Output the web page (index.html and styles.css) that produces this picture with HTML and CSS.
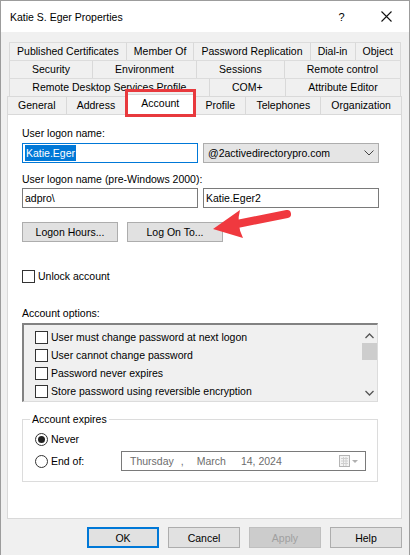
FILE: index.html
```html
<!DOCTYPE html>
<html lang="en">
<head>
  <meta charset="UTF-8">
  <title>Katie S. Eger Properties</title>
  <link rel="stylesheet" href="styles.css">
</head>
<body>

<div class="window">
  <header class="titlebar">
    <span class="title">Katie S. Eger Properties</span>
    <span class="caption-btn help-btn">?</span>
    <span class="caption-btn close-btn">
      <svg width="11" height="11" viewBox="0 0 11 11"><path d="M0.5 0.5 L10.5 10.5 M10.5 0.5 L0.5 10.5" stroke="#111" stroke-width="1.1" fill="none"/></svg>
    </span>
  </header>

  <div class="dialog">
    <div class="tabs">
      <div class="tab-row back">
        <span class="tab">Published Certificates</span>
        <span class="tab">Member Of</span>
        <span class="tab">Password Replication</span>
        <span class="tab">Dial-in</span>
        <span class="tab">Object</span>
      </div>
      <div class="tab-row back">
        <span class="tab">Security</span>
        <span class="tab">Environment</span>
        <span class="tab">Sessions</span>
        <span class="tab">Remote control</span>
      </div>
      <div class="tab-row back">
        <span class="tab">Remote Desktop Services Profile</span>
        <span class="tab">COM+</span>
        <span class="tab">Attribute Editor</span>
      </div>
      <div class="tab-row front">
        <span class="tab">General</span>
        <span class="tab">Address</span>
        <span class="tab active">Account</span>
        <span class="tab">Profile</span>
        <span class="tab">Telephones</span>
        <span class="tab">Organization</span>
      </div>
    </div>

    <div class="panel">
      <div class="field-label first">User logon name:</div>
      <div class="field-row">
        <div class="textbox focused"><span class="selected-text">Katie.Eger</span></div>
        <div class="combo">
          <span>@2activedirectorypro.com</span>
          <svg width="10" height="6" viewBox="0 0 10 6"><path d="M0.5 0.5 L5 5 L9.5 0.5" stroke="#444" fill="none"/></svg>
        </div>
      </div>

      <div class="field-label second">User logon name (pre-Windows 2000):</div>
      <div class="field-row tight">
        <div class="textbox">adpro\</div>
        <div class="textbox">Katie.Eger2</div>
      </div>

      <div class="button-row">
        <button class="btn">Logon Hours...</button>
        <button class="btn">Log On To...</button>
      </div>

      <label class="check-row unlock"><span class="check"></span>Unlock account</label>

      <div class="field-label options">Account options:</div>
      <div class="listbox">
        <div class="list-items">
          <div class="check-row"><span class="check"></span>User must change password at next logon</div>
          <div class="check-row"><span class="check"></span>User cannot change password</div>
          <div class="check-row"><span class="check"></span>Password never expires</div>
          <div class="check-row"><span class="check"></span>Store password using reversible encryption</div>
        </div>
        <div class="scrollbar">
          <svg width="9" height="6" viewBox="0 0 9 6"><path d="M0.5 5 L4.5 1 L8.5 5" stroke="#555" stroke-width="1.3" fill="none"/></svg>
          <div class="thumb"></div>
          <div class="track"></div>
          <svg width="9" height="6" viewBox="0 0 9 6"><path d="M0.5 1 L4.5 5 L8.5 1" stroke="#555" stroke-width="1.3" fill="none"/></svg>
        </div>
      </div>

      <fieldset class="groupbox">
        <legend>Account expires</legend>
        <div class="radio-row"><span class="radio checked"></span>Never</div>
        <div class="radio-row end-row">
          <span class="radio"></span><span class="end-label">End of:</span>
          <div class="datepicker">
            <span class="day">Thursday</span>
            <span class="comma">,</span>
            <span class="month">March</span>
            <span class="date">14, 2024</span>
            <svg class="cal" width="20" height="12" viewBox="0 0 20 12">
              <rect x="0.5" y="0.5" width="10" height="11" fill="#f4f4f4" stroke="#b5b5b5"/>
              <path d="M2 3.5 H9 M2 6 H9 M2 8.5 H9 M4.5 2 V11 M7 2 V11" stroke="#d0d0d0"/>
              <path d="M13 5 L19 5 L16 8 Z" fill="#b0b0b0"/>
            </svg>
          </div>
        </div>
      </fieldset>

      <!-- callout arrow pointing at the Log On To button -->
      <svg class="callout-arrow" width="90" height="40" viewBox="0 0 90 40">
        <path d="M32 19 L82 9" stroke="#f0393f" stroke-width="8" stroke-linecap="round"/>
        <path d="M8 24 L35 5 Q31 19 38 33 Z" fill="#f0393f"/>
      </svg>
    </div>

    <div class="footer-buttons">
      <button class="btn default">OK</button>
      <button class="btn">Cancel</button>
      <button class="btn" disabled>Apply</button>
      <button class="btn">Help</button>
    </div>
  </div>
</div>

</body>
</html>
```

FILE: styles.css
```css
* {
  box-sizing: border-box;
}
body {
  margin: 0;
  background: #fff;
  font-family: "Liberation Sans", Arial, sans-serif;
  font-size: 10.5px;
  color: #000;
}
.window {
  width: 410px;
  height: 555px;
  border: 1px solid #9c9c9c;
  border-bottom: none;
  background: #f0f0f0;
}

/* title bar */
.titlebar {
  height: 31px;
  background: #fff;
  display: flex;
  align-items: center;
  padding-left: 9px;
}
.title {
  flex: 1;
  font-size: 10.5px;
}
.caption-btn {
  width: 46px;
  height: 31px;
  display: flex;
  align-items: center;
  justify-content: center;
}
.help-btn {
  font-size: 11px;
  padding-left: 3px;
}

/* property sheet */
.dialog {
  padding: 10px 7px 0 6px;
}
.tab-row {
  display: flex;
  height: 18px;
}
.tab-row.back {
  margin: 0 1px 0 3px;
}
.tab-row.front {
  margin-left: 1px;
}
.tab {
  flex: 1 1 auto;
  height: 18px;
  line-height: 17px;
  padding: 0 5px;
  text-align: center;
  white-space: nowrap;
  border: 1px solid #d9d9d9;
  border-bottom: none;
  margin-left: -1px;
  background: #f0f0f0;
}
.tab-row.back .tab {
  border-top-color: #dcdcdc;
}
.tab.active {
  position: relative;
  z-index: 1;
  background: #fff;
  height: 21px;
  margin-top: -2px;
  line-height: 17px;
  flex-grow: 0;
  width: 70px;
}
/* red highlight round the selected tab */
.tab.active::after {
  content: "";
  position: absolute;
  top: -6px;
  left: -1px;
  right: -2px;
  bottom: -2px;
  border: 3px solid #e8393d;
}

.panel {
  position: relative;
  height: 405px;
  background: #fff;
  border: 1px solid #d9d9d9;
  padding: 0 0 0 14px;
}
.field-label {
  line-height: 14px;
  height: 14px;
}
.field-label.first {
  margin-top: 11px;
}
.field-label.second {
  margin-top: 9px;
}
.field-label.options {
  margin-top: 22px;
}
.field-row {
  display: flex;
  gap: 5px;
  margin-top: 3px;
}
.field-row.tight {
  margin-top: 2px;
}
.textbox,
.combo {
  width: 176px;
  height: 20px;
  border: 1px solid #7a7a7a;
  display: flex;
  align-items: center;
  padding-left: 2px;
}
.textbox.focused {
  border-color: #0078d7;
}
.selected-text {
  background: #0078d7;
  color: #fff;
  line-height: 16px;
  padding: 0 1px;
}
.combo {
  background: #e5e5e5;
  border-color: #adadad;
  padding: 0 4px 0 4px;
  justify-content: space-between;
}

.button-row {
  display: flex;
  gap: 9px;
  margin-top: 14px;
}
.btn {
  width: 96px;
  height: 20px;
  background: #e1e1e1;
  border: 1px solid #adadad;
  font-family: inherit;
  font-size: 10.5px;
  color: #000;
  padding: 0;
}
.btn:disabled {
  background: #cccccc;
  border-color: #bfbfbf;
  color: #a0a0a0;
}
.btn.default {
  border: 2px solid #0078d7;
}

.check-row {
  display: flex;
  align-items: center;
  height: 16px;
  gap: 3px;
}
.check-row.unlock {
  margin-top: 26px;
}
.check {
  width: 13px;
  height: 13px;
  border: 1px solid #333;
  background: #fff;
  flex-shrink: 0;
}

.listbox {
  display: flex;
  width: 356px;
  height: 79px;
  margin-top: 3px;
  background: #f0f0f0;
  border: 1px solid #dcdcdc;
  border-top: 2px solid #828282;
  border-left: 2px solid #828282;
}
.list-items {
  flex: 1;
  padding: 3px 0 0 11px;
}
.list-items .check-row {
  height: 18px;
}
.scrollbar {
  width: 16px;
  display: flex;
  flex-direction: column;
  align-items: center;
  padding: 8px 0 5px;
}
.thumb {
  width: 15px;
  height: 17px;
  background: #cdcdcd;
  margin-top: 4px;
}
.track {
  flex: 1;
}

.groupbox {
  width: 356px;
  margin: 10px 0 0;
  border: 1px solid #dcdcdc;
  padding: 5px 0 10px 12px;
}
.groupbox legend {
  padding: 0 2px;
  margin-left: -5px;
  line-height: 14px;
}
.radio-row {
  display: flex;
  align-items: center;
  height: 16px;
  gap: 3px;
}
.radio-row.end-row {
  height: 20px;
  margin-top: 4px;
}
.radio {
  width: 13px;
  height: 13px;
  border: 1px solid #333;
  border-radius: 50%;
  background: #fff;
  display: flex;
  align-items: center;
  justify-content: center;
}
.radio.checked::after {
  content: "";
  width: 7px;
  height: 7px;
  border-radius: 50%;
  background: #222;
}
.end-label {
  width: 67px;
}
.datepicker {
  width: 245px;
  height: 20px;
  border: 1px solid #7a7a7a;
  display: flex;
  align-items: center;
  color: #6d6d6d;
  padding-left: 8px;
}
.datepicker .comma {
  margin-left: 7px;
}
.datepicker .month {
  margin-left: 13px;
}
.datepicker .date {
  margin-left: 15px;
}
.datepicker .cal {
  margin-left: auto;
  margin-right: 6px;
}

.callout-arrow {
  position: absolute;
  left: 197px;
  top: 90px;
}

.footer-buttons {
  display: flex;
  justify-content: flex-end;
  gap: 9px;
  margin-top: 8px;
}
.footer-buttons .btn {
  width: 72px;
  height: 21px;
}
```
